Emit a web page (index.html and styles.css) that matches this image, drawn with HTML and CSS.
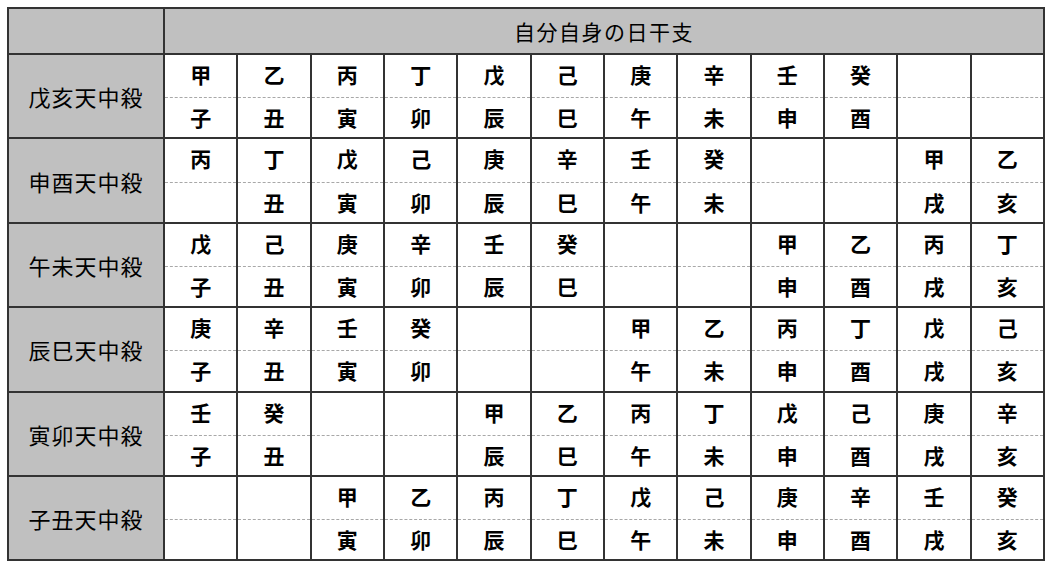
FILE: index.html
```html
<!DOCTYPE html>
<html lang="ja">
<head>
<meta charset="utf-8">
<link rel="stylesheet" href="styles.css">
</head>
<body>
<table class="grid">
<colgroup><col class="c-label"><col span="12" class="c-cell"></colgroup>
<thead>
<tr class="hd"><th class="corner"></th><th colspan="12" class="title">自分自身の日干支</th></tr>
</thead>
<tbody>
<tr class="top"><th rowspan="2" class="label">戊亥天中殺</th><td>甲</td><td>乙</td><td>丙</td><td>丁</td><td>戊</td><td>己</td><td>庚</td><td>辛</td><td>壬</td><td>癸</td><td></td><td></td></tr>
<tr class="bot"><td>子</td><td>丑</td><td>寅</td><td>卯</td><td>辰</td><td>巳</td><td>午</td><td>未</td><td>申</td><td>酉</td><td></td><td></td></tr>
<tr class="top"><th rowspan="2" class="label">申酉天中殺</th><td>丙</td><td>丁</td><td>戊</td><td>己</td><td>庚</td><td>辛</td><td>壬</td><td>癸</td><td></td><td></td><td>甲</td><td>乙</td></tr>
<tr class="bot"><td></td><td>丑</td><td>寅</td><td>卯</td><td>辰</td><td>巳</td><td>午</td><td>未</td><td></td><td></td><td>戌</td><td>亥</td></tr>
<tr class="top"><th rowspan="2" class="label">午未天中殺</th><td>戊</td><td>己</td><td>庚</td><td>辛</td><td>壬</td><td>癸</td><td></td><td></td><td>甲</td><td>乙</td><td>丙</td><td>丁</td></tr>
<tr class="bot"><td>子</td><td>丑</td><td>寅</td><td>卯</td><td>辰</td><td>巳</td><td></td><td></td><td>申</td><td>酉</td><td>戌</td><td>亥</td></tr>
<tr class="top"><th rowspan="2" class="label">辰巳天中殺</th><td>庚</td><td>辛</td><td>壬</td><td>癸</td><td></td><td></td><td>甲</td><td>乙</td><td>丙</td><td>丁</td><td>戊</td><td>己</td></tr>
<tr class="bot"><td>子</td><td>丑</td><td>寅</td><td>卯</td><td></td><td></td><td>午</td><td>未</td><td>申</td><td>酉</td><td>戌</td><td>亥</td></tr>
<tr class="top"><th rowspan="2" class="label">寅卯天中殺</th><td>壬</td><td>癸</td><td></td><td></td><td>甲</td><td>乙</td><td>丙</td><td>丁</td><td>戊</td><td>己</td><td>庚</td><td>辛</td></tr>
<tr class="bot"><td>子</td><td>丑</td><td></td><td></td><td>辰</td><td>巳</td><td>午</td><td>未</td><td>申</td><td>酉</td><td>戌</td><td>亥</td></tr>
<tr class="top"><th rowspan="2" class="label">子丑天中殺</th><td></td><td></td><td>甲</td><td>乙</td><td>丙</td><td>丁</td><td>戊</td><td>己</td><td>庚</td><td>辛</td><td>壬</td><td>癸</td></tr>
<tr class="bot"><td></td><td></td><td>寅</td><td>卯</td><td>辰</td><td>巳</td><td>午</td><td>未</td><td>申</td><td>酉</td><td>戌</td><td>亥</td></tr>
</tbody>
</table>
</body>
</html>
```
FILE: styles.css
```css
html, body {
  margin: 0;
  padding: 0;
  background: #ffffff;
}
body {
  padding: 7px 0 0 7px;
  font-family: "Noto Sans CJK JP", "Noto Sans", sans-serif;
  color: #000;
}
.grid {
  border-collapse: collapse;
  table-layout: fixed;
  width: 1038px;
}
.c-label { width: 156px; }
.grid th, .grid td {
  border: 2px solid #333333;
  padding: 0;
  text-align: center;
  vertical-align: middle;
  line-height: 1;
}
.hd th {
  background: #c0c0c0;
  height: 44px;
  font-weight: 400;
  font-size: 21px;
  letter-spacing: 1.5px;
}
.label {
  background: #c0c0c0;
  font-weight: 400;
  font-size: 22px;
  letter-spacing: 1px;
}
.grid td {
  font-weight: 700;
  font-size: 21px;
  height: 39.2px;
}
.top td {
  border-bottom: 1px dashed #a8a8a8;
  padding-bottom: 3px;
}
.bot td {
  border-top: 1px dashed #a8a8a8;
}
```
